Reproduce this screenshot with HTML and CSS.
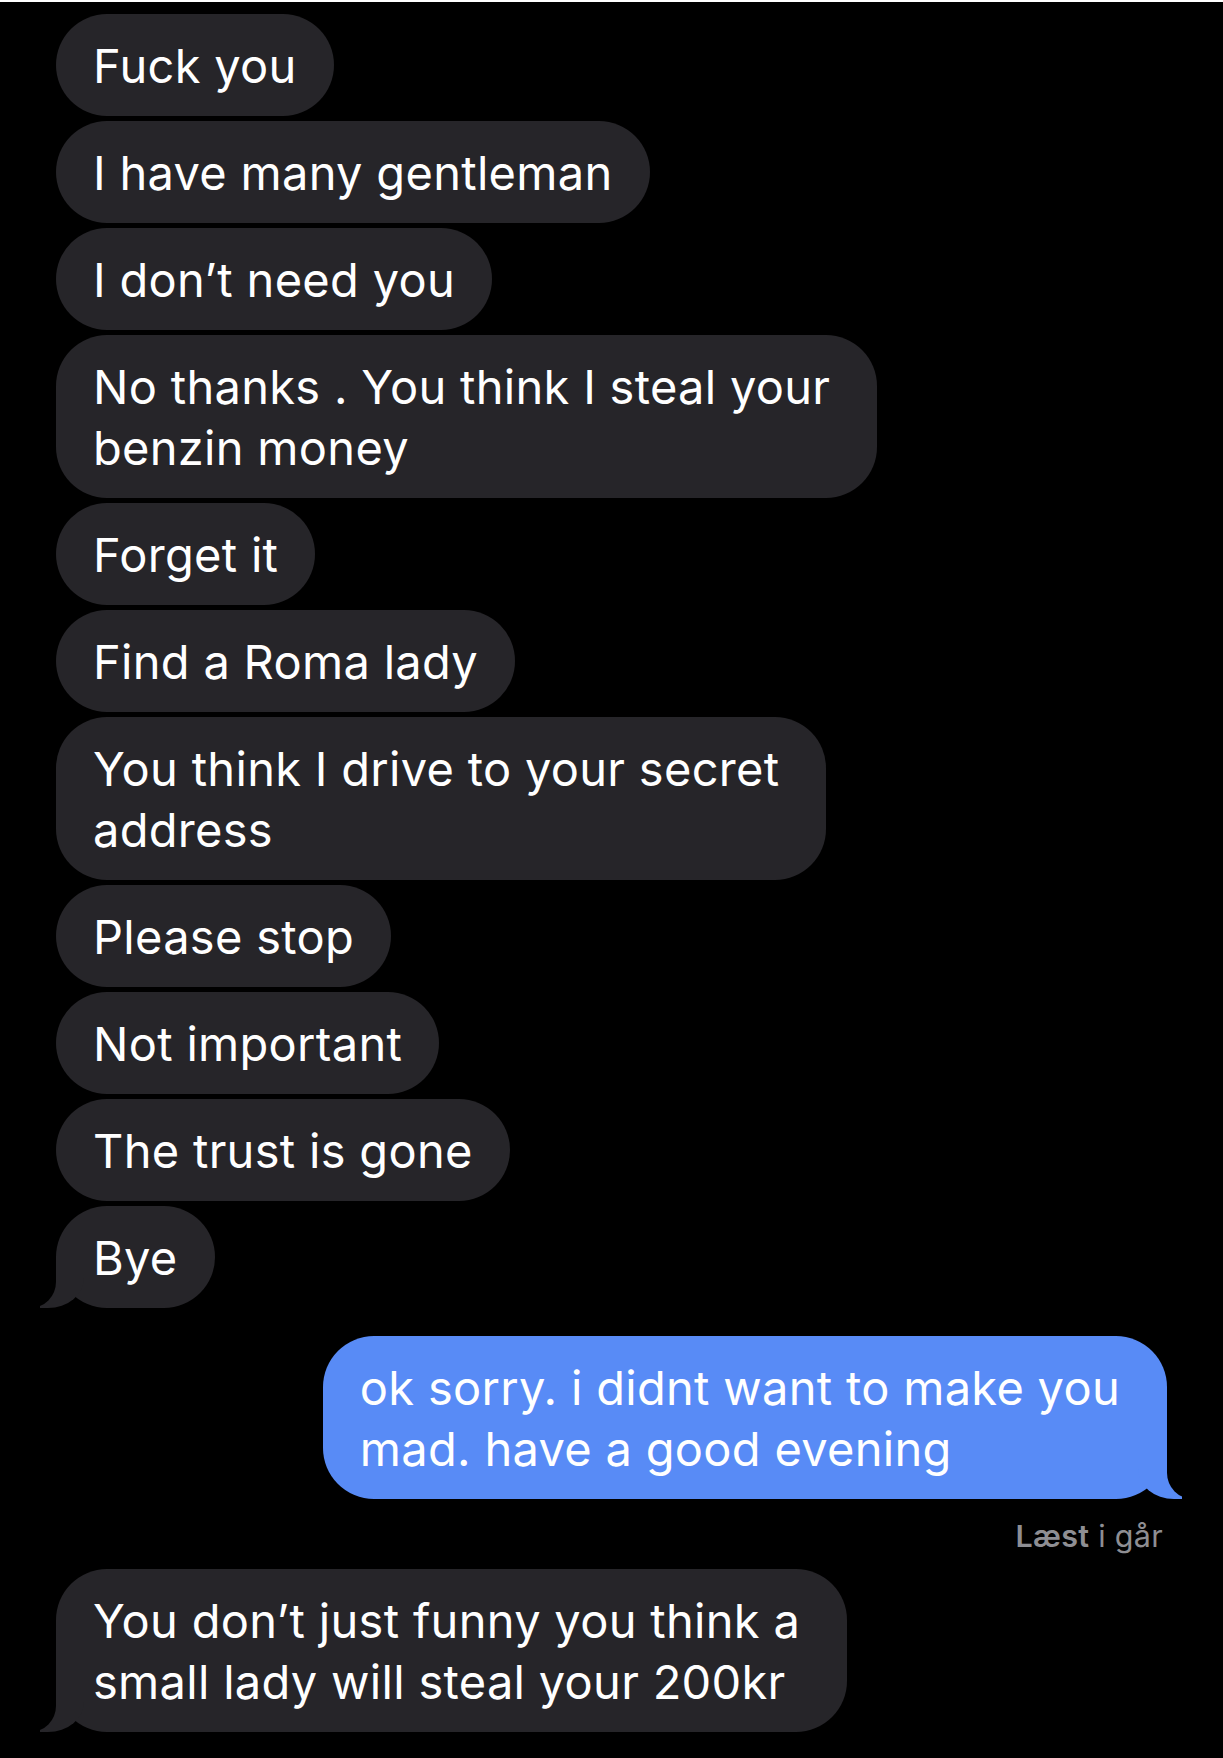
FILE: index.html
```html
<!DOCTYPE html>
<html lang="da">

<head>
    <meta charset="UTF-8">
    <meta name="viewport" content="width=device-width, initial-scale=1.0">
    <title>Beskeder</title>
    <link rel="stylesheet" href="styles.css">
</head>

<body>
    <div class="thread">
        <div class="msg in">Fuck you</div>
        <div class="msg in">I have many gentleman</div>
        <div class="msg in">I don’t need you</div>
        <div class="msg in multi">No thanks . You think I steal your<br>benzin money</div>
        <div class="msg in">Forget it</div>
        <div class="msg in">Find a Roma lady</div>
        <div class="msg in multi">You think I drive to your secret<br>address</div>
        <div class="msg in">Please stop</div>
        <div class="msg in">Not important</div>
        <div class="msg in">The trust is gone</div>
        <div class="msg in tail">Bye</div>

        <div class="msg out tail">ok sorry. i didnt want to make you<br>mad. have a good evening</div>
        <div class="receipt"><b>Læst</b> i går</div>

        <div class="msg in tail multi last">You don’t just funny you think a<br>small lady will steal your 200kr</div>
    </div>
</body>

</html>
```

FILE: styles.css
```css
html,
body {
    background-color: #000;
}

body {
    margin: 0;
    border-top: 2px solid #fff;
    font-family: Inter, "Noto Sans", sans-serif;
    min-height: 100vh;
}

.thread {
    display: flex;
    flex-direction: column;
    align-items: flex-start;
    gap: 5px;
    padding: 12px 56px 20px;
}

.msg {
    position: relative;
    z-index: 0;
    padding: 20.5px 37px;
    font-size: 47px;
    line-height: 61px;
    letter-spacing: 0.3px;
    color: #fff;
    background-color: #262529;
    border-radius: 51px;
}

.msg.multi {
    padding-right: 47px;
}

.msg.out {
    align-self: flex-end;
    margin-top: 23px;
    padding-right: 47px;
    background-color: #588bf6;
}

.msg.last {
    margin-top: 11px;
}

/* bubble tails */
.msg.tail::before,
.msg.tail::after {
    content: "";
    position: absolute;
    bottom: 0;
    z-index: -1;
    height: 52px;
}

.in.tail::before {
    left: -16px;
    width: 44px;
    background-color: #262529;
    border-bottom-right-radius: 36px 30px;
}

.in.tail::after {
    left: -50px;
    width: 50px;
    background-color: #000;
    border-bottom-right-radius: 26px;
}

.out.tail::before {
    right: -15px;
    width: 44px;
    background-color: #588bf6;
    border-bottom-left-radius: 36px 30px;
}

.out.tail::after {
    right: -50px;
    width: 50px;
    background-color: #000;
    border-bottom-left-radius: 26px;
}

.receipt {
    align-self: flex-end;
    margin-top: 14px;
    margin-right: 4px;
    font-size: 30.5px;
    line-height: 35px;
    letter-spacing: 0.3px;
    color: #8e8e93;
}

.receipt b {
    font-weight: 600;
}
```
